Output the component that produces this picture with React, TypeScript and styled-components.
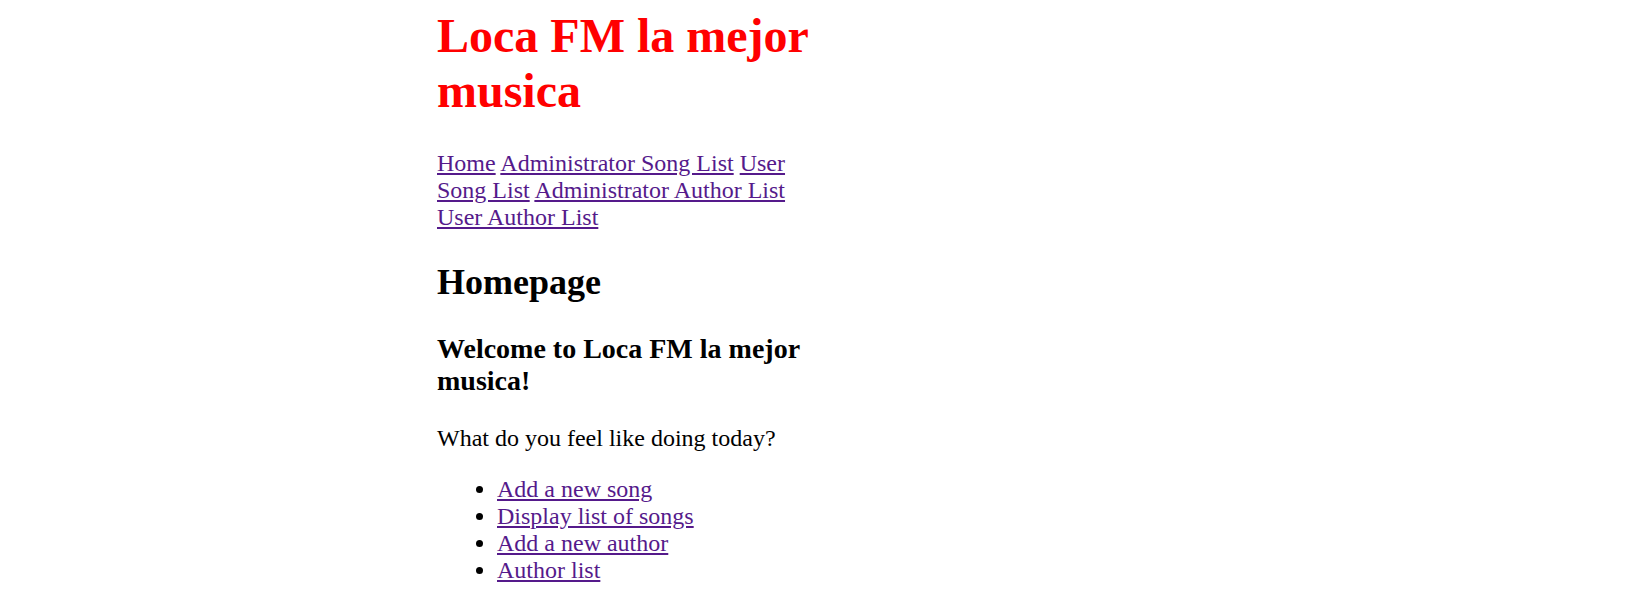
import React from "react";
import styled, { createGlobalStyle } from "styled-components";

const Global = createGlobalStyle`
  html, body { background: #ffffff; }
  body {
    margin: 8px;
    font-family: "Liberation Serif", "Times New Roman", serif;
    font-size: 24px;
    color: #000000;
  }
`;

const Page = styled.div`
  display: flex;
  justify-content: flex-start;
`;

const Column = styled.main`
  width: 385px;
  margin-left: 429px;
`;

const Title = styled.h1`
  color: #ff0000;
  font-size: 48px;
  font-weight: bold;
  margin: 0 0 32px 0;
`;

const Nav = styled.nav`
  display: block;
`;

const NavLink = styled.a`
  color: #551a8b;
  text-decoration: underline;
`;

const Heading = styled.h2`
  font-size: 36px;
  font-weight: bold;
  margin: 30px 0;
`;

const SubHeading = styled.h3`
  font-size: 28px;
  font-weight: bold;
  margin: 28px 0;
`;

const Text = styled.p`
  margin: 24px 0;
`;

const List = styled.ul`
  margin: 24px 0;
  padding-left: 60px;
  list-style: disc;
`;

const Item = styled.li`
  display: list-item;
`;

const navItems = [
  "Home",
  "Administrator Song List",
  "User Song List",
  "Administrator Author List",
  "User Author List",
];

const actions = [
  "Add a new song",
  "Display list of songs",
  "Add a new author",
  "Author list",
];

export default function App() {
  return (
    <>
      <Global />
      <Page>
        <Column>
          <Title>Loca FM la mejor musica</Title>
          <Nav>
            {navItems.map((n, i) => (
              <React.Fragment key={n}>
                <NavLink href="#">{n}</NavLink>
                {i < navItems.length - 1 ? " " : null}
              </React.Fragment>
            ))}
          </Nav>
          <Heading>Homepage</Heading>
          <SubHeading>Welcome to Loca FM la mejor musica!</SubHeading>
          <Text>What do you feel like doing today?</Text>
          <List>
            {actions.map((a) => (
              <Item key={a}>
                <NavLink href="#">{a}</NavLink>
              </Item>
            ))}
          </List>
        </Column>
      </Page>
    </>
  );
}
